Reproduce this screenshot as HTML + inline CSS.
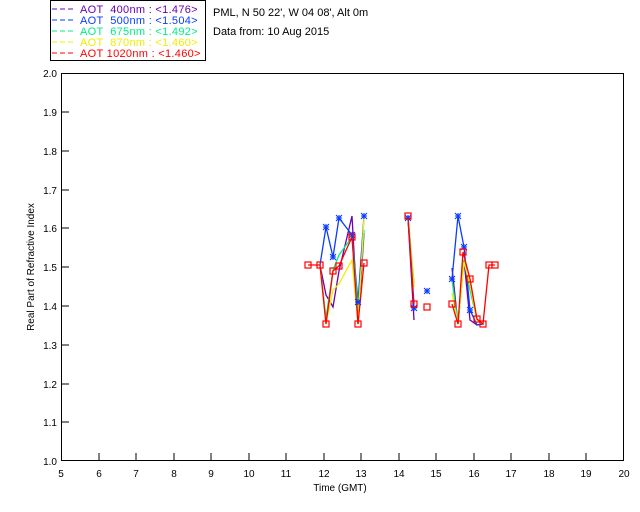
<!DOCTYPE html>
<html><head><meta charset="utf-8"><style>
html,body{margin:0;padding:0;background:#fff;}
svg{display:block;font-family:"Liberation Sans",sans-serif;}
</style></head><body>
<svg width="640" height="512" viewBox="0 0 640 512" xmlns="http://www.w3.org/2000/svg">
<rect width="640" height="512" fill="#fff"/>
<rect x="50.5" y="0.5" width="155" height="60" fill="#fff" stroke="#000"/>
<g font-size="11" letter-spacing="0.3">
<line x1="52" y1="9" x2="74" y2="9" stroke="#6a00b0" stroke-dasharray="5,3"/>
<text x="80" y="13" fill="#6a00b0">AOT&#160;&#160;400nm : &lt;1.476&gt;</text>
<line x1="52" y1="20" x2="74" y2="20" stroke="#0a3cff" stroke-dasharray="5,3"/>
<text x="80" y="24" fill="#0a3cff">AOT&#160;&#160;500nm : &lt;1.504&gt;</text>
<line x1="52" y1="31" x2="74" y2="31" stroke="#00ee88" stroke-dasharray="5,3"/>
<text x="80" y="35" fill="#00ee88">AOT&#160;&#160;675nm : &lt;1.492&gt;</text>
<line x1="52" y1="42" x2="74" y2="42" stroke="#eeee00" stroke-dasharray="5,3"/>
<text x="80" y="46" fill="#eeee00">AOT&#160;&#160;870nm : &lt;1.460&gt;</text>
<line x1="52" y1="53" x2="74" y2="53" stroke="#ff0000" stroke-dasharray="5,3"/>
<text x="80" y="57" fill="#ff0000">AOT 1020nm : &lt;1.460&gt;</text>
</g>
<g font-size="11" fill="#000">
<text x="213" y="16">PML, N 50 22', W 04 08', Alt 0m</text>
<text x="213" y="35">Data from: 10 Aug 2015</text>
</g>
<rect x="61.5" y="73.5" width="562" height="387" fill="none" stroke="#000"/>
<g stroke="#000">
<path d="M99,461v-8M136,461v-8M174,461v-8M211,461v-8M249,461v-8M286,461v-8M324,461v-8M361,461v-8M399,461v-8M436,461v-8M474,461v-8M511,461v-8M549,461v-8M586,461v-8"/>
<path d="M61,112h8M61,151h8M61,190h8M61,228h8M61,267h8M61,306h8M61,345h8M61,384h8M61,422h8"/>
</g>
<g font-size="10" text-anchor="middle">
<text x="61" y="477">5</text><text x="99" y="477">6</text><text x="136" y="477">7</text><text x="174" y="477">8</text><text x="211" y="477">9</text><text x="249" y="477">10</text><text x="286" y="477">11</text><text x="324" y="477">12</text><text x="361" y="477">13</text><text x="399" y="477">14</text><text x="436" y="477">15</text><text x="474" y="477">16</text><text x="511" y="477">17</text><text x="549" y="477">18</text><text x="586" y="477">19</text><text x="624" y="477">20</text>
<text x="340" y="491">Time (GMT)</text>
</g>
<g font-size="10" text-anchor="end">
<text x="57" y="77">2.0</text><text x="57" y="116">1.9</text><text x="57" y="155">1.8</text><text x="57" y="194">1.7</text><text x="57" y="232">1.6</text><text x="57" y="271">1.5</text><text x="57" y="310">1.4</text><text x="57" y="349">1.3</text><text x="57" y="388">1.2</text><text x="57" y="426">1.1</text><text x="57" y="465">1.0</text>
</g>
<text font-size="10" transform="translate(34,267) rotate(-90)" text-anchor="middle">Real Part of Refractive Index</text>
<g fill="none" stroke-width="1.3">
<polyline stroke="#6a00b0" points="320,265 326,295 333,307 339,271 352,216 358,324 364,233"/>
<polyline stroke="#6a00b0" points="408,218 414,320"/>
<polyline stroke="#6a00b0" points="452,268 458,324 464,260 470,320 477,325 483,324"/>
<polyline stroke="#0a3cff" points="320,265 326,227 333,257 339,218 352,235 358,302 364,216"/>
<polyline stroke="#0a3cff" points="408,218 414,308"/>
<polyline stroke="#0a3cff" points="452,279 458,216 464,247 470,310 477,325 483,324"/>
<polyline stroke="#00ee88" points="320,265 326,318 333,270 339,255 352,237 358,310 364,230"/>
<polyline stroke="#00ee88" points="408,216 414,283"/>
<polyline stroke="#00ee88" points="452,280 458,323 464,260 470,290 477,320 483,324"/>
<polyline stroke="#eeee00" points="320,265 326,323 333,290 339,284 352,260 358,324 364,218"/>
<polyline stroke="#eeee00" points="408,216 414,287"/>
<polyline stroke="#eeee00" points="452,293 458,324 464,262 470,285 477,320 483,324"/>
<polyline stroke="#ff0000" points="308,265 320,265 326,324 333,271 339,266 352,237 358,324 364,263"/>
<polyline stroke="#ff0000" points="408,216 414,304"/>
<polyline stroke="#ff0000" points="452,304 458,324 463,252 470,279 477,319 483,324 489,265 495,265"/>
</g>
<g fill="none" stroke="#0a3cff" stroke-width="1.1">
<path d="M323,227h6M326,224v6M323,224l6,6M329,224l-6,6
M330,257h6M333,254v6M330,254l6,6M336,254l-6,6
M336,218h6M339,215v6M336,215l6,6M342,215l-6,6
M349,235h6M352,232v6M349,232l6,6M355,232l-6,6
M355,302h6M358,299v6M355,299l6,6M361,299l-6,6
M361,216h6M364,213v6M361,213l6,6M367,213l-6,6
M405,218h6M408,215v6M405,215l6,6M411,215l-6,6
M411,308h6M414,305v6M411,305l6,6M417,305l-6,6
M424,291h6M427,288v6M424,288l6,6M430,288l-6,6
M449,279h6M452,276v6M449,276l6,6M455,276l-6,6
M455,216h6M458,213v6M455,213l6,6M461,213l-6,6
M461,247h6M464,244v6M461,244l6,6M467,244l-6,6
M467,310h6M470,307v6M467,307l6,6M473,307l-6,6"/>
</g>
<g fill="none" stroke="#ff0000" stroke-width="1.2">
<rect x="305" y="262" width="6" height="6"/><rect x="317" y="262" width="6" height="6"/><rect x="323" y="321" width="6" height="6"/><rect x="330" y="268" width="6" height="6"/><rect x="336" y="263" width="6" height="6"/><rect x="349" y="234" width="6" height="6"/><rect x="355" y="321" width="6" height="6"/><rect x="361" y="260" width="6" height="6"/><rect x="405" y="213" width="6" height="6"/><rect x="411" y="301" width="6" height="6"/><rect x="424" y="304" width="6" height="6"/><rect x="449" y="301" width="6" height="6"/><rect x="455" y="321" width="6" height="6"/><rect x="460" y="249" width="6" height="6"/><rect x="467" y="276" width="6" height="6"/><rect x="474" y="316" width="6" height="6"/><rect x="480" y="321" width="6" height="6"/><rect x="486" y="262" width="6" height="6"/><rect x="492" y="262" width="6" height="6"/>
</g>
</svg>
</body></html>
